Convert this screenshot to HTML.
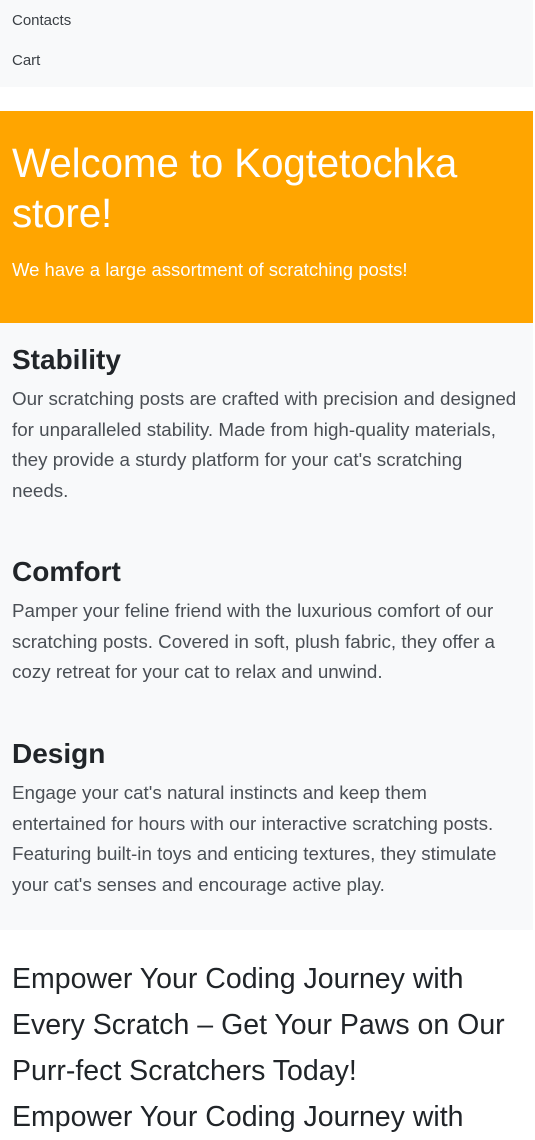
<!DOCTYPE html>
<html><head><meta charset="utf-8"><style>
*{margin:0;padding:0;box-sizing:border-box}
body{width:535px;height:1103px;overflow:hidden;background:#fff;font-family:"Liberation Sans",sans-serif;color:#212529}
.nav{background:#f8f9fa;height:87px;width:533px;position:relative}
.nav a{position:absolute;left:12px;font-size:15px;color:#3a3f44;text-decoration:none}
.hero{position:absolute;top:111px;left:0;width:533px;height:212px;background:#ffa500;color:#fff;padding:0 12px}
.hero h1{position:absolute;top:27px;left:12px;font-weight:300;font-size:40.5px;line-height:50px;white-space:nowrap;letter-spacing:-0.2px}
.hero p{position:absolute;top:148px;left:12px;font-size:18.5px;white-space:nowrap}
.feat{position:absolute;top:323px;left:0;width:533px;height:607px;background:#f8f9fa}
.f{position:absolute;left:12px;white-space:nowrap}
.f h2{font-size:28px;font-weight:bold;line-height:34px;margin-bottom:7px}
.f p{font-size:18.8px;line-height:30.5px;color:#4a4f55}
.end{position:absolute;top:956px;left:12px;font-size:28.5px;line-height:46px;white-space:nowrap;color:#212529}
</style></head><body>
<div class="nav"><a style="top:12px">Contacts</a><a style="top:52px">Cart</a></div>
<div class="hero"><h1>Welcome to Kogtetochka<br>store!</h1><p>We have a large assortment of scratching posts!</p></div>
<div class="feat">
<div class="f" style="top:20px"><h2>Stability</h2><p>Our scratching posts are crafted with precision and designed<br>for unparalleled stability. Made from high-quality materials,<br>they provide a sturdy platform for your cat's scratching<br>needs.</p></div>
<div class="f" style="top:232px"><h2>Comfort</h2><p>Pamper your feline friend with the luxurious comfort of our<br>scratching posts. Covered in soft, plush fabric, they offer a<br>cozy retreat for your cat to relax and unwind.</p></div>
<div class="f" style="top:414px"><h2>Design</h2><p>Engage your cat's natural instincts and keep them<br>entertained for hours with our interactive scratching posts.<br>Featuring built-in toys and enticing textures, they stimulate<br>your cat's senses and encourage active play.</p></div>
</div>
<div class="end">Empower Your Coding Journey with<br>Every Scratch – Get Your Paws on Our<br>Purr-fect Scratchers Today!<br>Empower Your Coding Journey with</div>
</body></html>
